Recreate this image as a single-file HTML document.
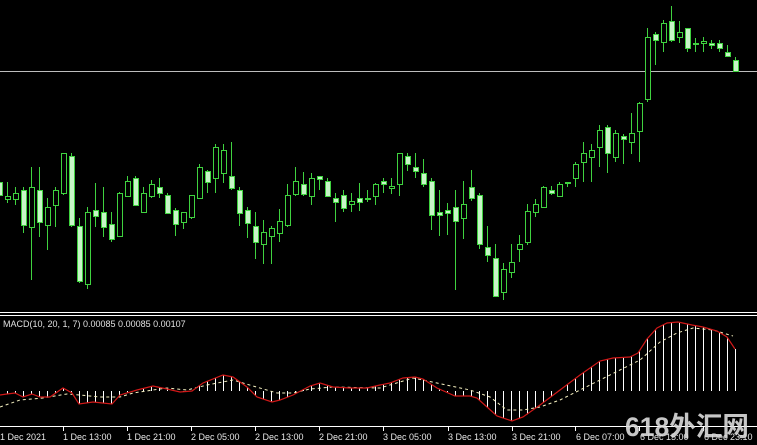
<!DOCTYPE html>
<html><head><meta charset="utf-8">
<style>
html,body{margin:0;padding:0;background:#000;width:757px;height:445px;overflow:hidden}
svg{display:block}
text{font-family:"Liberation Sans","Noto Sans CJK SC",sans-serif}
</style></head>
<body>
<svg id="s" width="757" height="445" xmlns="http://www.w3.org/2000/svg">
<rect width="757" height="445" fill="#000"/>
<line x1="0" y1="71.5" x2="757" y2="71.5" stroke="#bdbdbd" stroke-width="1"/>
<line x1="0" y1="312.5" x2="757" y2="312.5" stroke="#fff" stroke-width="1"/>
<line x1="0" y1="315.5" x2="757" y2="315.5" stroke="#fff" stroke-width="1"/>
<text x="3" y="327" font-size="9" fill="#e0e0e0">MACD(10, 20, 1, 7) 0.00085 0.00085 0.00107</text>
<line x1="0" y1="426.5" x2="757" y2="426.5" stroke="#fff" stroke-width="1"/>
<g id="c"></g><g id="m"></g>
<g font-size="9" fill="#e6e6e6">
<text x="0" y="440">1 Dec 2021</text>
<text x="63" y="440">1 Dec 13:00</text>
<text x="127" y="440">1 Dec 21:00</text>
<text x="191" y="440">2 Dec 05:00</text>
<text x="255" y="440">2 Dec 13:00</text>
<text x="319" y="440">2 Dec 21:00</text>
<text x="383" y="440">3 Dec 05:00</text>
<text x="448" y="440">3 Dec 13:00</text>
<text x="512" y="440">3 Dec 21:00</text>
<text x="576" y="440">6 Dec 07:00</text>
<text x="640" y="440">6 Dec 15:00</text>
<text x="704" y="440">6 Dec 23:10</text>
</g>
<g stroke="#fff" stroke-width="1">
<line x1="63.5" y1="426" x2="63.5" y2="431"/><line x1="127.5" y1="426" x2="127.5" y2="431"/>
<line x1="191.5" y1="426" x2="191.5" y2="431"/><line x1="255.5" y1="426" x2="255.5" y2="431"/>
<line x1="319.5" y1="426" x2="319.5" y2="431"/><line x1="383.5" y1="426" x2="383.5" y2="431"/>
<line x1="448.5" y1="426" x2="448.5" y2="431"/><line x1="512.5" y1="426" x2="512.5" y2="431"/>
<line x1="575.5" y1="426" x2="575.5" y2="431"/><line x1="639.5" y1="426" x2="639.5" y2="431"/>
<line x1="703.5" y1="426" x2="703.5" y2="431"/>
</g>
<text x="625" y="436" font-size="27" font-weight="bold" fill="#dcdcdc" fill-opacity="0.9" textLength="124" lengthAdjust="spacingAndGlyphs">618外汇网</text>
</svg>
<script>
var C=[
[-1,182,195,176,205,1],[7,196,199,182,203,0],[15,193,199,187,205,0],[23,190,225,187,233,1],[31,187,227,167,280,0],
[39,190,222,167,237,1],[47,207,225,198,250,0],[55,190,205,187,227,0],[63,153,193,153,195,0],[71,156,225,153,227,1],
[79,226,281,218,283,1],[87,212,284,207,289,0],[95,210,216,183,227,1],[103,212,227,187,237,1],[111,224,239,212,242,1],
[119,193,236,192,237,0],[127,181,196,176,197,0],[135,178,205,176,206,1],[143,193,212,187,213,0],[151,184,196,180,198,0],
[159,187,193,178,198,1],[167,195,213,193,214,1],[175,210,224,208,236,1],[183,212,222,212,229,0],[191,195,217,195,219,0],
[199,167,198,164,199,0],[207,171,182,170,193,1],[215,147,178,144,193,0],[223,150,173,144,183,0],[231,176,188,142,190,1],
[239,190,213,187,226,1],[247,210,223,207,238,1],[255,226,242,212,259,1],[263,232,244,220,264,0],[271,228,236,226,264,0],
[279,221,233,209,242,0],[287,195,225,184,227,0],[295,181,194,167,196,0],[303,184,194,172,196,1],[311,178,196,173,205,0],
[319,176,179,176,190,1],[327,181,196,178,197,1],[335,198,202,193,222,1],[343,195,208,190,212,1],[351,201,204,193,212,0],
[359,198,202,183,211,1],[367,198,199,190,202,0],[375,184,196,183,205,0],[383,181,184,178,193,1],[391,186,188,178,194,0],
[399,153,184,153,196,0],[407,156,164,153,171,1],[415,167,171,153,178,1],[423,173,184,159,187,1],[431,181,215,178,230,1],
[439,212,215,190,236,1],[447,210,213,203,235,1],[455,207,221,190,290,1],[463,204,218,181,239,0],[471,187,198,170,201,1],
[479,195,244,193,249,1],[487,247,255,226,262,1],[495,258,296,244,297,1],[503,269,292,263,300,0],[511,262,272,244,278,0],
[519,244,249,235,262,0],[527,211,242,204,245,0],[535,204,212,199,217,0],[543,187,207,186,208,0],[551,190,193,186,195,1],
[559,184,196,182,197,0],[567,182,183,182,187,0],[575,164,178,162,187,0],[583,153,162,142,182,0],[591,150,157,144,182,0],
[599,130,147,125,167,0],[607,127,153,125,173,1],[615,133,157,130,162,0],[623,136,139,134,164,1],[631,133,142,113,154,0],
[639,103,131,102,162,0],[647,37,99,28,102,0],[655,34,40,32,65,1],[663,23,42,20,52,0],[671,21,40,6,42,1],
[679,32,37,21,43,0],[687,28,48,28,52,1],[695,43,44,38,52,0],[703,41,43,37,52,0],[711,43,45,40,49,1],
[719,43,48,40,52,1],[727,52,56,45,57,1],[735,60,71,57,72,1]
];
var g=document.getElementById("c"),h="";
C.forEach(function(c){
 var x=c[0]+0.5;
 h+='<line x1="'+x+'" y1="'+c[3]+'" x2="'+x+'" y2="'+c[4]+'" stroke="#3fd23f" stroke-width="1"/>';
 var bh=Math.max(c[2]-c[1],1);
 h+='<rect x="'+(c[0]-1.5)+'" y="'+(c[1]+0.5)+'" width="5" height="'+bh+'" fill="'+(c[5]?'#c8f5c8':'#000')+'" stroke="#3fd23f" stroke-width="1"/>';
});
g.innerHTML=h;
var R=[[0,395],[7,394],[15,393],[23,397],[32,394],[40,397],[50,397],[63,388],[72,393],[79,404],[93,402],[112,404],[120,395],[137,390],[153,386],[167,389],[180,392],[192,391],[203,383],[223,375],[233,377],[247,387],[257,397],[272,402],[280,400],[293,395],[310,386],[320,383],[333,387],[350,388],[367,388],[380,385],[390,383],[403,378],[415,377],[423,379],[437,388],[455,396],[470,396],[477,398],[487,407],[497,416],[512,421],[523,417],[540,405],[560,390],[580,375],[600,361],[613,358],[630,357],[638,353],[647,339],[657,328],[667,323],[678,322],[692,325],[703,327],[717,331],[727,337],[735,349]];
var S=[[0,407],[20,400],[43,398],[67,394],[80,395],[100,397],[120,397],[133,393],[153,390],[167,388],[187,390],[207,385],[233,380],[253,386],[277,393],[293,393],[310,389],[333,387],[380,388],[413,378],[437,383],[470,390],[490,397],[507,410],[523,410],[540,407],[560,400],[580,390],[600,380],[620,370],[640,360],[660,342],[677,333],[693,328],[713,330],[733,336]];
function interp(P,x){for(var i=1;i<P.length;i++){if(x<=P[i][0]){var a=P[i-1],b=P[i],t=(x-a[0])/(b[0]-a[0]);return a[1]+t*(b[1]-a[1]);}}return P[P.length-1][1];}
var m="";
C.forEach(function(c){var x=c[0]+0.5;if(x<0)return;var y=interp(R,c[0]);m+='<line x1="'+x+'" y1="391" x2="'+x+'" y2="'+y.toFixed(1)+'" stroke="#fff" stroke-width="1"/>';});
m+='<polyline points="'+S.map(function(p){return p.join(",")}).join(" ")+'" fill="none" stroke="#f5f0c0" stroke-width="1" stroke-dasharray="3,3"/>';
m+='<polyline points="'+R.map(function(p){return p.join(",")}).join(" ")+'" fill="none" stroke="#d01818" stroke-width="1.2"/>';
document.getElementById("m").innerHTML=m;
</script>
</body></html>
